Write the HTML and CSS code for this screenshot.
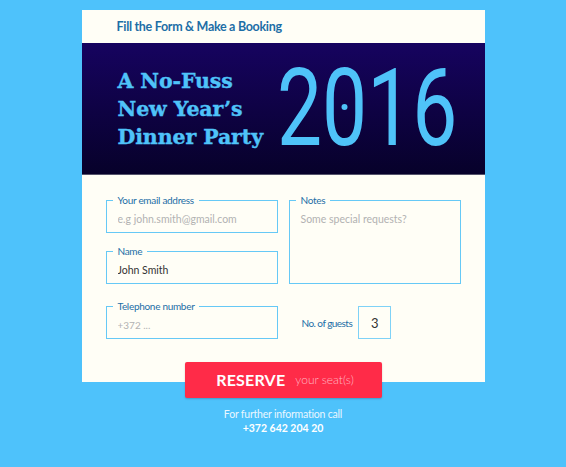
FILE: index.html
```html
<!DOCTYPE html>
<html lang="en">
<head>
<meta charset="utf-8">
<title>New Year's Dinner Party 2016</title>
<link rel="stylesheet" href="styles.css">
</head>
<body>
<main class="page">
  <section class="card">
    <header class="card-head">Fill the Form &amp; Make a Booking</header>
    <div class="banner">
      <h1 class="title">A No-Fuss<br>New Year’s<br>Dinner Party</h1>
      <div class="year"><span class="digits">2<span class="zero">0</span>16</span></div>
    </div>
    <form class="form">
      <fieldset class="field f-email">
        <legend>Your email address</legend>
        <input type="email" placeholder="e.g john.smith@gmail.com">
      </fieldset>
      <fieldset class="field f-notes">
        <legend>Notes</legend>
        <textarea placeholder="Some special requests?"></textarea>
      </fieldset>
      <fieldset class="field f-name">
        <legend>Name</legend>
        <input type="text" value="John Smith">
      </fieldset>
      <fieldset class="field f-tel">
        <legend>Telephone number</legend>
        <input type="tel" placeholder="+372 ...">
      </fieldset>
      <div class="guests">
        <span class="guests-label">No. of guests</span>
        <span class="guests-box">3</span>
      </div>
    </form>
  </section>
  <button class="reserve" type="button"><span class="r-main">RESERVE</span><span class="r-sub">your seat(s)</span></button>
  <footer class="info">
    <div>For further information call</div>
    <div class="phone">+372 642 204 20</div>
  </footer>
</main>
</body>
</html>
```

FILE: styles.css
```css
* { box-sizing: border-box; }
html, body { margin: 0; padding: 0; }
body {
  background: #4ec2fb;
  font-family: Lato, "Noto Sans", sans-serif;
  width: 566px;
  height: 467px;
  overflow: hidden;
}
.page { padding-top: 10px; }

.card {
  width: 403px;
  margin: 0 auto;
  background: #fffef6;
}
.card-head {
  height: 33px;
  display: flex;
  align-items: center;
  padding-left: 35px;
  font-weight: 700;
  font-size: 12.5px;
  letter-spacing: -0.3px;
  color: #1d6ea6;
}

.banner {
  height: 132px;
  background: linear-gradient(#16035f, #07012a);
  border-bottom: 1px solid #55546c;
  display: flex;
  align-items: center;
  padding-left: 36px;
  color: #4fc3f9;
}
.title {
  width: 159px;
  margin: 0;
  font-family: "DejaVu Serif", "Liberation Serif", serif;
  font-weight: 700;
  font-size: 20.5px;
  line-height: 28px;
  letter-spacing: -0.1px;
  -webkit-text-stroke: 0.4px currentColor;
}
.year { width: 170px; height: 107px; }
.digits {
  display: inline-block;
  font-family: Roboto, sans-serif;
  font-weight: 400;
  font-size: 107px;
  line-height: 1;
  white-space: nowrap;
  transform: scaleX(0.75);
  transform-origin: left center;
}
.zero { display: inline-block; position: relative; }
.zero::after {
  content: "";
  position: absolute;
  left: 50%;
  top: 52px;
  width: 8px;
  height: 6px;
  border-radius: 50%;
  background: currentColor;
  transform: translate(-50%, -50%);
}

.form {
  display: grid;
  grid-template-columns: 172px 172px;
  grid-template-areas:
    "email notes"
    "name notes"
    "tel guests";
  column-gap: 11px;
  row-gap: 12px;
  padding: 19px 24px 43px;
}
.field {
  margin: 0;
  min-width: 0;
  border: 1px solid #66c9f6;
  padding: 0 6px;
}
.field legend {
  padding: 0 5px;
  font-size: 10px;
  line-height: 12px;
  letter-spacing: -0.3px;
  color: #1d6ea6;
}
.field input, .field textarea {
  display: block;
  width: 100%;
  border: none;
  outline: none;
  background: transparent;
  font-family: inherit;
  font-size: 10.5px;
  color: #333;
  padding: 0 5px;
  margin: 0;
}
.field input { height: 26px; }
.field textarea {
  height: 77px;
  padding-top: 6px;
  resize: none;
  line-height: 14px;
}
::placeholder { color: #b2b2b2; font-weight: 400; opacity: 1; }

.f-email { grid-area: email; }
.f-name { grid-area: name; }
.f-notes { grid-area: notes; }
.f-tel { grid-area: tel; margin-top: 4px; }
.f-tel input::placeholder { font-size: 10px; }

.guests {
  grid-area: guests;
  align-self: end;
  height: 33px;
  display: flex;
  align-items: center;
  padding-left: 13px;
  gap: 6px;
}
.guests-label {
  font-size: 10px;
  letter-spacing: -0.55px;
  color: #1d6ea6;
}
.guests-box {
  width: 33px;
  height: 33px;
  border: 1px solid #7fd2f7;
  display: flex;
  align-items: center;
  justify-content: center;
  font-size: 13px;
  color: #333;
}

.reserve {
  position: relative;
  display: flex;
  align-items: center;
  justify-content: center;
  gap: 10px;
  width: 197px;
  height: 36px;
  margin: -20px auto 0;
  border: none;
  border-radius: 2px;
  background: #ff2b48;
  box-shadow: 0 1px 2px rgba(0, 0, 0, 0.2);
  font-family: inherit;
  padding: 0 0 1px 4px;
}
.r-main {
  font-weight: 700;
  font-size: 16px;
  color: #fff;
  letter-spacing: 0.2px;
}
.r-sub {
  font-weight: 300;
  font-size: 12px;
  color: #ffb7c2;
}

.info {
  margin-top: 9px;
  text-align: center;
  font-size: 10.5px;
  line-height: 14px;
  letter-spacing: -0.2px;
  color: #eaf7ff;
}
.phone { font-weight: 700; color: #fff; letter-spacing: 0; }
```
